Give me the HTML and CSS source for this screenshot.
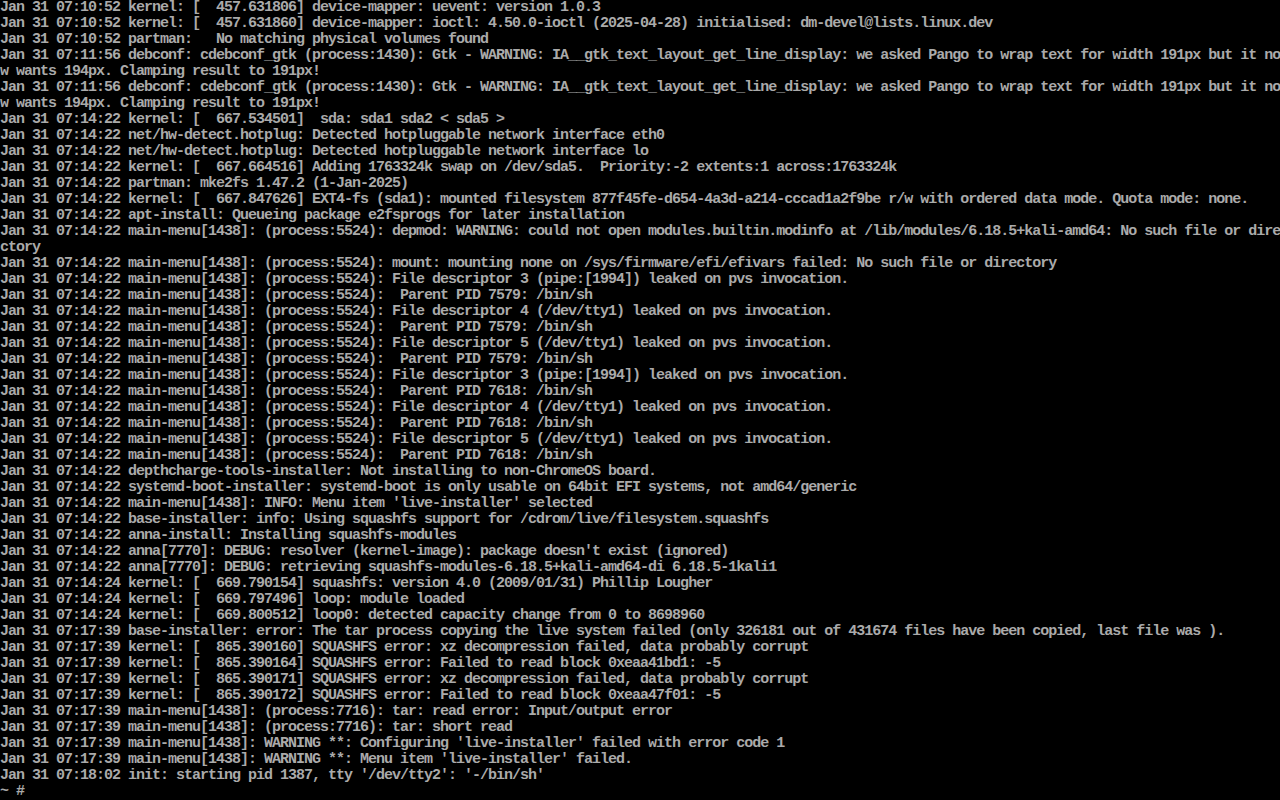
FILE: index.html
```html
<!DOCTYPE html>
<html>
<head>
<meta charset="utf-8">
<link rel="stylesheet" href="styles.css">
</head>
<body>
<pre class="console">Jan 31 07:10:52 kernel: [  457.631806] device-mapper: uevent: version 1.0.3
Jan 31 07:10:52 kernel: [  457.631860] device-mapper: ioctl: 4.50.0-ioctl (2025-04-28) initialised: dm-devel@lists.linux.dev
Jan 31 07:10:52 partman:   No matching physical volumes found
Jan 31 07:11:56 debconf: cdebconf_gtk (process:1430): Gtk - WARNING: IA__gtk_text_layout_get_line_display: we asked Pango to wrap text for width 191px but it no
w wants 194px. Clamping result to 191px!
Jan 31 07:11:56 debconf: cdebconf_gtk (process:1430): Gtk - WARNING: IA__gtk_text_layout_get_line_display: we asked Pango to wrap text for width 191px but it no
w wants 194px. Clamping result to 191px!
Jan 31 07:14:22 kernel: [  667.534501]  sda: sda1 sda2 &lt; sda5 &gt;
Jan 31 07:14:22 net/hw-detect.hotplug: Detected hotpluggable network interface eth0
Jan 31 07:14:22 net/hw-detect.hotplug: Detected hotpluggable network interface lo
Jan 31 07:14:22 kernel: [  667.664516] Adding 1763324k swap on /dev/sda5.  Priority:-2 extents:1 across:1763324k
Jan 31 07:14:22 partman: mke2fs 1.47.2 (1-Jan-2025)
Jan 31 07:14:22 kernel: [  667.847626] EXT4-fs (sda1): mounted filesystem 877f45fe-d654-4a3d-a214-cccad1a2f9be r/w with ordered data mode. Quota mode: none.
Jan 31 07:14:22 apt-install: Queueing package e2fsprogs for later installation
Jan 31 07:14:22 main-menu[1438]: (process:5524): depmod: WARNING: could not open modules.builtin.modinfo at /lib/modules/6.18.5+kali-amd64: No such file or dire
ctory
Jan 31 07:14:22 main-menu[1438]: (process:5524): mount: mounting none on /sys/firmware/efi/efivars failed: No such file or directory
Jan 31 07:14:22 main-menu[1438]: (process:5524): File descriptor 3 (pipe:[1994]) leaked on pvs invocation.
Jan 31 07:14:22 main-menu[1438]: (process:5524):  Parent PID 7579: /bin/sh
Jan 31 07:14:22 main-menu[1438]: (process:5524): File descriptor 4 (/dev/tty1) leaked on pvs invocation.
Jan 31 07:14:22 main-menu[1438]: (process:5524):  Parent PID 7579: /bin/sh
Jan 31 07:14:22 main-menu[1438]: (process:5524): File descriptor 5 (/dev/tty1) leaked on pvs invocation.
Jan 31 07:14:22 main-menu[1438]: (process:5524):  Parent PID 7579: /bin/sh
Jan 31 07:14:22 main-menu[1438]: (process:5524): File descriptor 3 (pipe:[1994]) leaked on pvs invocation.
Jan 31 07:14:22 main-menu[1438]: (process:5524):  Parent PID 7618: /bin/sh
Jan 31 07:14:22 main-menu[1438]: (process:5524): File descriptor 4 (/dev/tty1) leaked on pvs invocation.
Jan 31 07:14:22 main-menu[1438]: (process:5524):  Parent PID 7618: /bin/sh
Jan 31 07:14:22 main-menu[1438]: (process:5524): File descriptor 5 (/dev/tty1) leaked on pvs invocation.
Jan 31 07:14:22 main-menu[1438]: (process:5524):  Parent PID 7618: /bin/sh
Jan 31 07:14:22 depthcharge-tools-installer: Not installing to non-ChromeOS board.
Jan 31 07:14:22 systemd-boot-installer: systemd-boot is only usable on 64bit EFI systems, not amd64/generic
Jan 31 07:14:22 main-menu[1438]: INFO: Menu item 'live-installer' selected
Jan 31 07:14:22 base-installer: info: Using squashfs support for /cdrom/live/filesystem.squashfs
Jan 31 07:14:22 anna-install: Installing squashfs-modules
Jan 31 07:14:22 anna[7770]: DEBUG: resolver (kernel-image): package doesn't exist (ignored)
Jan 31 07:14:22 anna[7770]: DEBUG: retrieving squashfs-modules-6.18.5+kali-amd64-di 6.18.5-1kali1
Jan 31 07:14:24 kernel: [  669.790154] squashfs: version 4.0 (2009/01/31) Phillip Lougher
Jan 31 07:14:24 kernel: [  669.797496] loop: module loaded
Jan 31 07:14:24 kernel: [  669.800512] loop0: detected capacity change from 0 to 8698960
Jan 31 07:17:39 base-installer: error: The tar process copying the live system failed (only 326181 out of 431674 files have been copied, last file was ).
Jan 31 07:17:39 kernel: [  865.390160] SQUASHFS error: xz decompression failed, data probably corrupt
Jan 31 07:17:39 kernel: [  865.390164] SQUASHFS error: Failed to read block 0xeaa41bd1: -5
Jan 31 07:17:39 kernel: [  865.390171] SQUASHFS error: xz decompression failed, data probably corrupt
Jan 31 07:17:39 kernel: [  865.390172] SQUASHFS error: Failed to read block 0xeaa47f01: -5
Jan 31 07:17:39 main-menu[1438]: (process:7716): tar: read error: Input/output error
Jan 31 07:17:39 main-menu[1438]: (process:7716): tar: short read
Jan 31 07:17:39 main-menu[1438]: WARNING **: Configuring 'live-installer' failed with error code 1
Jan 31 07:17:39 main-menu[1438]: WARNING **: Menu item 'live-installer' failed.
Jan 31 07:18:02 init: starting pid 1387, tty '/dev/tty2': '-/bin/sh'
~ #</pre>
</body>
</html>
```
FILE: styles.css
```css
html, body {
  margin: 0;
  padding: 0;
  background: #000000;
  width: 1280px;
  height: 800px;
  overflow: hidden;
}

.console {
  margin: 0;
  padding: 0;
  color: #aaaaaa;
  font-family: "Liberation Mono", "DejaVu Sans Mono", monospace;
  font-size: 15px;
  letter-spacing: -1px;
  line-height: 16px;
  white-space: pre;
  font-weight: bold;
}
```
